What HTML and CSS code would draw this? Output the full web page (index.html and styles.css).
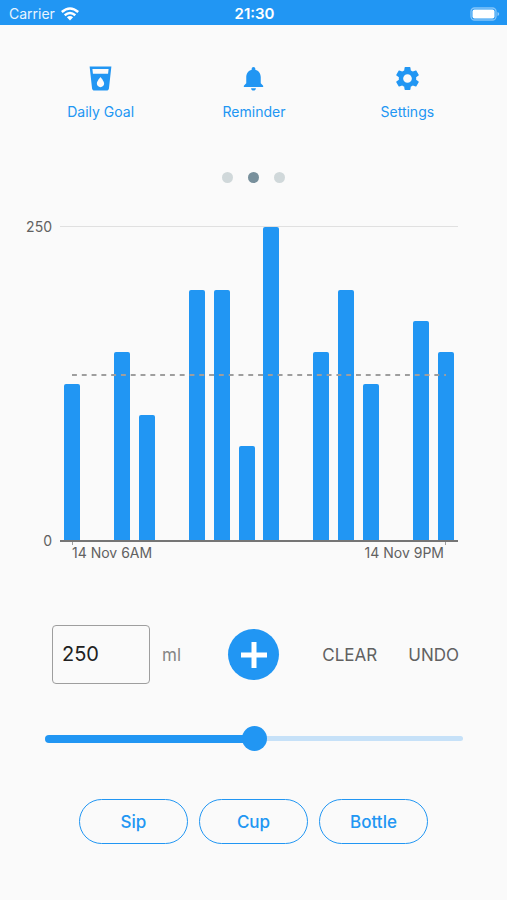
FILE: index.html
```html
<!DOCTYPE html>
<html lang="en">
<head>
<meta charset="utf-8">
<meta name="viewport" content="width=device-width, initial-scale=1">
<title>Water intake</title>
<link rel="stylesheet" href="styles.css">
</head>
<body>
<header class="status">
  <div class="status-left">
    <span>Carrier</span>
    <svg class="wifi" viewBox="0 0 18 14" aria-hidden="true">
      <path d="M.8 5Q9-2 17.200 5M3.700 8.200Q9 3.700 14.300 8.200" fill="none" stroke="currentColor" stroke-width="2.500"/>
      <path d="M5.900 10.300Q9 7.500 12.100 10.300L9 13.500Z" fill="currentColor"/>
    </svg>
  </div>
  <time class="clock">21:30</time>
  <svg class="battery" viewBox="0 0 30 14" aria-label="Battery full">
    <rect x="1" y="1" width="25" height="12" rx="3.500" fill="none" stroke="#fff" stroke-opacity=".45" stroke-width="1.300"/>
    <rect x="2.500" y="2.500" width="22" height="9" rx="2" fill="#fff"/>
    <path d="M27.500 5v4q1.700-.5 1.700-2t-1.700-2z" fill="#fff" fill-opacity=".5"/>
  </svg>
</header>

<main>
  <nav class="nav">
    <a href="#goal">
      <svg class="icon" viewBox="0 0 24 24" aria-hidden="true">
        <path fill="currentColor" fill-rule="evenodd" d="M3 2l2.010 18.230C5.130 21.230 5.970 22 7 22h10c1.030 0 1.870-.77 1.990-1.770L21 2H3zM5.300 4.200h13.400L18.250 8H5.750zM12 19.200c-1.660 0-3-1.340-3-3 0-2 3-5.400 3-5.400s3 3.400 3 5.400c0 1.660-1.340 3-3 3z"/>
      </svg>
      <span>Daily Goal</span>
    </a>
    <a href="#reminder">
      <svg class="icon" viewBox="0 0 24 24" aria-hidden="true">
        <path fill="currentColor" d="M12 22c1.100 0 2-.9 2-2h-4c0 1.100.9 2 2 2zm6-6v-5c0-3.070-1.630-5.640-4.500-6.320V4c0-.83-.67-1.500-1.500-1.500s-1.500.67-1.500 1.500v.68C7.640 5.360 6 7.920 6 11v5l-2 2v1h16v-1l-2-2z"/>
      </svg>
      <span>Reminder</span>
    </a>
    <a href="#settings">
      <svg class="icon" viewBox="0 0 24 24" aria-hidden="true">
        <path fill="currentColor" d="M19.140 12.940c.04-.3.060-.61.060-.94s-.02-.64-.07-.94l2.030-1.580c.18-.14.230-.41.120-.61l-1.920-3.320c-.12-.22-.37-.29-.59-.22l-2.390.96c-.5-.38-1.030-.7-1.620-.94l-.36-2.540c-.04-.24-.24-.41-.48-.41h-3.840c-.24 0-.43.170-.47.410l-.36 2.540c-.59.240-1.130.570-1.620.940l-2.390-.96c-.22-.08-.47 0-.59.220L2.740 8.870c-.12.210-.08.470.120.610l2.030 1.580c-.05.300-.09.630-.09.940s.02.640.070.940l-2.030 1.580c-.18.140-.23.410-.12.610l1.920 3.320c.12.220.37.290.59.220l2.390-.96c.5.380 1.030.7 1.620.94l.36 2.540c.05.240.24.410.48.410h3.840c.24 0 .44-.17.47-.41l.36-2.540c.59-.24 1.130-.56 1.620-.94l2.390.96c.22.080.47 0 .59-.22l1.920-3.320c.12-.22.070-.47-.12-.61l-2.010-1.580zM12 15.600c-1.980 0-3.600-1.620-3.600-3.600s1.620-3.600 3.600-3.600 3.600 1.620 3.600 3.600-1.620 3.600-3.600 3.600z"/>
      </svg>
      <span>Settings</span>
    </a>
  </nav>

  <div class="dots" aria-hidden="true"><i></i><i class="current"></i><i></i></div>

  <section class="chart" aria-label="Intake per hour in ml">
    <div class="y-axis"><span>250</span><span>0</span></div>
    <div class="plot">
      <div class="bars">
        <i style="height:50%"></i><i style="height:0%"></i><i style="height:60%"></i><i style="height:40%"></i>
        <i style="height:0%"></i><i style="height:80%"></i><i style="height:80%"></i><i style="height:30%"></i>
        <i style="height:100%"></i><i style="height:0%"></i><i style="height:60%"></i><i style="height:80%"></i>
        <i style="height:50%"></i><i style="height:0%"></i><i style="height:70%"></i><i style="height:60%"></i>
      </div>
      <svg class="average" aria-hidden="true"><line x1="0" y1="1" x2="100%" y2="1" pathLength="382"/></svg>
    </div>
    <div class="x-axis"><span>14 Nov 6AM</span><span>14 Nov 9PM</span></div>
  </section>

  <form class="entry">
    <div class="amount">
      <input id="amount" type="text" inputmode="numeric" value="250">
      <label for="amount">ml</label>
    </div>
    <button class="add" type="button" aria-label="Add">
      <svg viewBox="0 0 26 26" aria-hidden="true"><path d="M13 0v26M0 13h26" stroke="currentColor" stroke-width="5"/></svg>
    </button>
    <div class="actions">
      <button type="button">CLEAR</button>
      <button type="button">UNDO</button>
    </div>
  </form>

  <div class="slider">
    <input type="range" min="0" max="500" value="250" aria-label="Amount in ml">
  </div>

  <div class="presets">
    <button type="button">Sip</button>
    <button type="button">Cup</button>
    <button type="button">Bottle</button>
  </div>
</main>
</body>
</html>
```
FILE: styles.css
```css
:root {
  --blue: #2196f3;
  --page: #fafafa;
}

* { box-sizing: border-box; }

body {
  margin: 0;
  min-height: 100vh;
  background: var(--page);
  color: #616161;
  font-family: Inter, "Liberation Sans", sans-serif;
  font-size: 14px;
  line-height: 20px;
}

button, input { font: inherit; }

button {
  border: 0;
  padding: 0;
  background: none;
  color: inherit;
  cursor: pointer;
}

.status {
  display: grid;
  grid-template-columns: 1fr auto 1fr;
  align-items: center;
  height: 25px;
  padding: 2px 7px 0 9px;
  background: var(--blue);
  color: #fff;
}

.status-left {
  display: flex;
  align-items: center;
  gap: 6px;
  color: #e9f4fe;
}

.wifi { width: 18px; height: 14px; color: #fff; }
.clock { font-size: 15px; font-weight: 600; }
.battery { width: 30px; height: 14px; justify-self: end; }

.nav {
  display: grid;
  grid-template-columns: repeat(3, 1fr);
  padding: 39px 23px 0 24px;
}

.nav a {
  display: flex;
  flex-direction: column;
  align-items: center;
  gap: 9px;
  color: var(--blue);
  text-decoration: none;
}

.icon { width: 29px; height: 29px; }

.dots {
  display: flex;
  justify-content: center;
  gap: 15px;
  margin-top: 50px;
}

.dots i {
  width: 11px;
  height: 11px;
  border-radius: 50%;
  background: #d0d8da;
}

.dots .current { background: #78909c; }

.chart {
  display: grid;
  grid-template-columns: 60px 1fr;
  margin: 43px 49px 0 0;
}

.y-axis {
  display: flex;
  flex-direction: column;
  justify-content: space-between;
  align-items: flex-end;
  margin: -9px 0;
  padding-right: 8px;
}

.plot {
  position: relative;
  height: 316px;
  border-top: 1px solid #e0e0e0;
  border-bottom: 2px solid #757575;
}

.bars {
  display: grid;
  grid-template-columns: repeat(16, 1fr);
  align-items: end;
  justify-items: center;
  height: 100%;
}

.bars i {
  width: 16px;
  border-radius: 2px 2px 0 0;
  background: var(--blue);
}

.average {
  position: absolute;
  left: 3%;
  top: 147px;
  width: 94%;
  height: 2px;
}

.average line {
  stroke: #9e9e9e;
  stroke-width: 2;
  stroke-dasharray: 5 5;
}

.x-axis {
  grid-column: 2;
  display: flex;
  justify-content: space-between;
  padding: 0 12px;
}

.x-axis span {
  padding: 1px 2px 0 0;
  background: linear-gradient(#9e9e9e, #9e9e9e) left top / 1px 3px no-repeat;
}

.x-axis span:last-child { background-position: right top; }

.entry {
  display: grid;
  grid-template-columns: 1fr auto 1fr;
  align-items: center;
  margin-top: 62px;
  padding: 0 48px;
  font-size: 17px;
}

.amount {
  display: flex;
  align-items: center;
  gap: 12px;
  padding-left: 4px;
  color: #858585;
}

.amount input {
  width: 98px;
  height: 59px;
  padding: 0 0 2px 9px;
  border: 1px solid #9e9e9e;
  border-radius: 4px;
  background: none;
  color: #212121;
  font-size: 20px;
}

.add {
  display: grid;
  place-items: center;
  width: 51px;
  height: 51px;
  border-radius: 50%;
  background: var(--blue);
  color: #fff;
}

.add svg { width: 26px; height: 26px; }

.actions {
  display: flex;
  justify-content: flex-end;
  gap: 31px;
}

.slider {
  position: relative;
  height: 25px;
  margin: 42px 44px 0 45px;
}

.slider::before,
.slider::after {
  content: "";
  position: absolute;
  left: 0;
  border-radius: 4px;
}

.slider::before {
  top: 10px;
  width: 100%;
  height: 5px;
  background: #c6e1f8;
}

.slider::after {
  top: 9px;
  width: 50%;
  height: 8px;
  background: var(--blue);
}

.slider input {
  position: relative;
  z-index: 1;
  display: block;
  width: 100%;
  height: 25px;
  margin: 0;
  background: none;
  appearance: none;
}

.slider input::-webkit-slider-thumb {
  width: 25px;
  height: 25px;
  border-radius: 50%;
  background: var(--blue);
  appearance: none;
}

.presets {
  display: flex;
  justify-content: center;
  gap: 11px;
  margin: 48px 0;
}

.presets button {
  width: 109px;
  height: 45px;
  border: 1px solid var(--blue);
  border-radius: 23px;
  color: var(--blue);
  font-size: 17px;
  font-weight: 500;
}
```
